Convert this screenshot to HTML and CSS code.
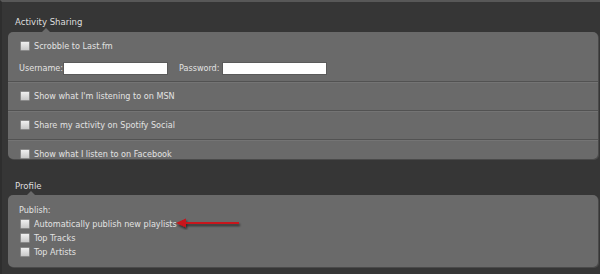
FILE: index.html
```html
<!DOCTYPE html>
<html lang="en">
  <head>
    <meta charset="UTF-8" />
    <meta name="viewport" content="width=device-width, initial-scale=1.0" />
    <title>Preferences</title>
    <link rel="stylesheet" href="styles.css">
  </head>
  <body>
    <div class="prefs">
      <div class="group">
        <h2 class="group-title">Activity Sharing</h2>
        <div class="panel panel-sharing">
          <div class="row row-scrobble">
            <label class="check"><input type="checkbox" /> Scrobble to Last.fm</label>
            <div class="login">
              <label for="username" class="user-label">Username:</label>
              <input type="text" id="username" class="field" />
              <label for="password" class="pass-label">Password:</label>
              <input type="password" id="password" class="field" />
            </div>
          </div>
          <div class="row">
            <label class="check"><input type="checkbox" /> Show what I'm listening to on MSN</label>
          </div>
          <div class="row">
            <label class="check"><input type="checkbox" /> Share my activity on Spotify Social</label>
          </div>
          <div class="row">
            <label class="check"><input type="checkbox" /> Show what I listen to on Facebook</label>
          </div>
        </div>
      </div>

      <div class="group">
        <h2 class="group-title">Profile</h2>
        <div class="panel panel-profile">
          <div class="publish-label">Publish:</div>
          <label class="check"><input type="checkbox" /> Automatically publish new playlists</label>
          <label class="check"><input type="checkbox" /> Top Tracks</label>
          <label class="check"><input type="checkbox" /> Top Artists</label>

          <!-- annotation arrow pointing at the first option -->
          <svg class="arrow" width="70" height="12" viewBox="0 0 70 12">
            <defs>
              <filter id="shadow" x="-10%" y="-50%" width="130%" height="250%">
                <feDropShadow dx="1" dy="2" stdDeviation="1.2" flood-color="#000" flood-opacity="0.6" />
              </filter>
            </defs>
            <g filter="url(#shadow)">
              <line x1="8" y1="5" x2="64" y2="5" stroke="#c8141a" stroke-width="2" />
              <polygon points="1,5 11,0.5 11,9.5" fill="#c8141a" />
            </g>
          </svg>
        </div>
      </div>
    </div>
  </body>
</html>
```

FILE: styles.css
```css
/* Preferences pane */
body {
  margin: 0;
  background-color: #363636;
  font-family: "DejaVu Sans Condensed", "DejaVu Sans", sans-serif;
  font-size: 9px;
  color: #e2e2e2;
}
.prefs {
  width: 600px;
  height: 274px;
  box-sizing: border-box;
  border-top: 2px solid #585858;
  border-left: 2px solid #2e2e2e;
  overflow: hidden;
}
.group-title {
  margin: 13px 0 3px 13px;
  font-size: 9.5px;
  font-weight: normal;
  line-height: 14px;
  color: #dedede;
}
.group + .group .group-title {
  margin-top: 20px;
  margin-bottom: 2px;
}
.panel {
  position: relative;
  margin: 0 2px 0 6px;
  background-color: #6a6a6a;
  border-radius: 5px;
  box-shadow: 1px 1px 0 #4a4a4a;
}
.panel::before {
  content: "";
  position: absolute;
  top: -4px;
  left: 19px;
  border-left: 4px solid transparent;
  border-right: 4px solid transparent;
  border-bottom: 4px solid #6a6a6a;
}
.panel-sharing {
  height: 127px;
  overflow: hidden;
}
.panel-sharing::before {
  display: none;
}
.group:first-child .group-title {
  position: relative;
}
.group:first-child .group-title::after {
  content: "";
  position: absolute;
  bottom: -3px;
  left: 27px;
  border-left: 4px solid transparent;
  border-right: 4px solid transparent;
  border-bottom: 4px solid #6a6a6a;
}
.row {
  padding: 7px 12px;
  border-bottom: 1px solid #525252;
  box-shadow: 0 1px 0 #747474;
}
.row-scrobble {
  padding-bottom: 6px;
}
.check {
  display: flex;
  align-items: center;
  height: 14px;
  line-height: 14px;
}
.check input {
  appearance: none;
  width: 10px;
  height: 10px;
  margin: 0 4px 0 0;
  border: 1px solid #8a8a8a;
  border-radius: 1px;
  background: linear-gradient(#f0f0f0, #c8c8c8);
  box-sizing: border-box;
}
.login {
  display: flex;
  align-items: center;
  margin-top: 8px;
  margin-left: -1px;
  height: 14px;
}
.user-label {
  width: 44px;
}
.pass-label {
  width: 43px;
  margin-left: 11px;
}
.field {
  width: 105px;
  height: 13px;
  box-sizing: border-box;
  margin: 0;
  padding: 0 2px;
  border: 1px solid #5a5a5a;
  background-color: #ffffff;
}
.panel-profile {
  padding: 8px 12px 8px 12px;
}
.publish-label {
  height: 14px;
  line-height: 14px;
  margin-left: -1px;
}
.arrow {
  position: absolute;
  left: 167px;
  top: 23px;
}
```
